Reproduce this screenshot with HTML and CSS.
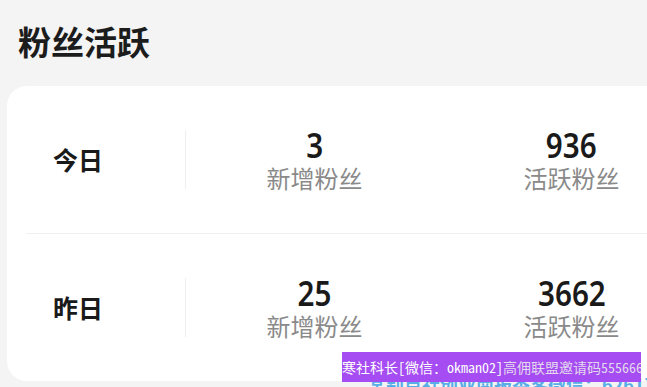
FILE: index.html
```html
<!DOCTYPE html>
<html lang="zh">
<head>
<meta charset="utf-8">
<link rel="stylesheet" href="styles.css">
</head>
<body>
<div class="page">
  <h1 class="title">粉丝活跃</h1>
  <div class="card">
    <div class="row">
      <div class="day">今日</div>
      <div class="divider"></div>
      <div class="stat"><div class="num">3</div><div class="label">新增粉丝</div></div>
      <div class="stat"><div class="num">936</div><div class="label">活跃粉丝</div></div>
    </div>
    <div class="sep"></div>
    <div class="row">
      <div class="day">昨日</div>
      <div class="divider"></div>
      <div class="stat"><div class="num">25</div><div class="label">新增粉丝</div></div>
      <div class="stat"><div class="num">3662</div><div class="label">活跃粉丝</div></div>
    </div>
  </div>
  <div class="under-mark">某别点社创业南报香客微信：626172190</div>
  <div class="watermark"><span class="wm-main">寒社科长[微信：okman02]</span><span class="wm-sub">高佣联盟邀请码555666</span></div>
</div>
</body>
</html>
```
FILE: styles.css
```css
html, body {
  margin: 0;
  padding: 0;
  background: #f4f4f4;
  overflow: hidden;
}
.page {
  position: relative;
  width: 647px;
  height: 387px;
  overflow: hidden;
  font-family: "Noto Sans CJK SC", "Noto Sans", sans-serif;
}
.title {
  margin: 0;
  padding: 25px 0 0 18px;
  font-size: 33px;
  line-height: 32px;
  font-weight: 700;
  color: #1c1c1c;
}
.card {
  margin: 29px 0 0 7px;
  width: 720px;
  background: #fff;
  border-radius: 20px;
  padding: 0 19px;
  box-sizing: border-box;
}
.row {
  display: flex;
  align-items: center;
  height: 147px;
}
.sep {
  height: 1px;
  background: #f0f0f0;
}
.day {
  width: 104px;
  text-align: center;
  font-size: 25px;
  line-height: 25px;
  font-weight: 700;
  color: #1a1a1a;
}
.divider {
  width: 1px;
  height: 59px;
  margin-left: 55px;
  background: #efefef;
}
.stat {
  width: 257px;
  flex-shrink: 0;
  display: flex;
  flex-direction: column;
  align-items: center;
}
.num {
  font-family: "Noto Sans", sans-serif;
  font-weight: 600;
  font-size: 34px;
  line-height: 32px;
  color: #1a1a1a;
  transform: scaleX(0.87);
}
.label {
  margin-top: 4px;
  font-size: 24px;
  line-height: 26px;
  color: #8a8a8a;
}
.under-mark {
  position: absolute;
  left: 368px;
  top: 374px;
  font-size: 18px;
  line-height: 20px;
  font-weight: 700;
  color: #5aaee8;
  white-space: nowrap;
}
.watermark {
  position: absolute;
  left: 342px;
  top: 352px;
  width: 299px;
  height: 30px;
  background: #a54cf2;
  display: flex;
  align-items: center;
  font-family: "Noto Sans Mono CJK SC", "Noto Sans CJK SC", monospace;
  font-size: 14px;
  white-space: nowrap;
  overflow: hidden;
}
.wm-main { color: #ffffff; }
.wm-sub { color: #e3d8ee; }
```
